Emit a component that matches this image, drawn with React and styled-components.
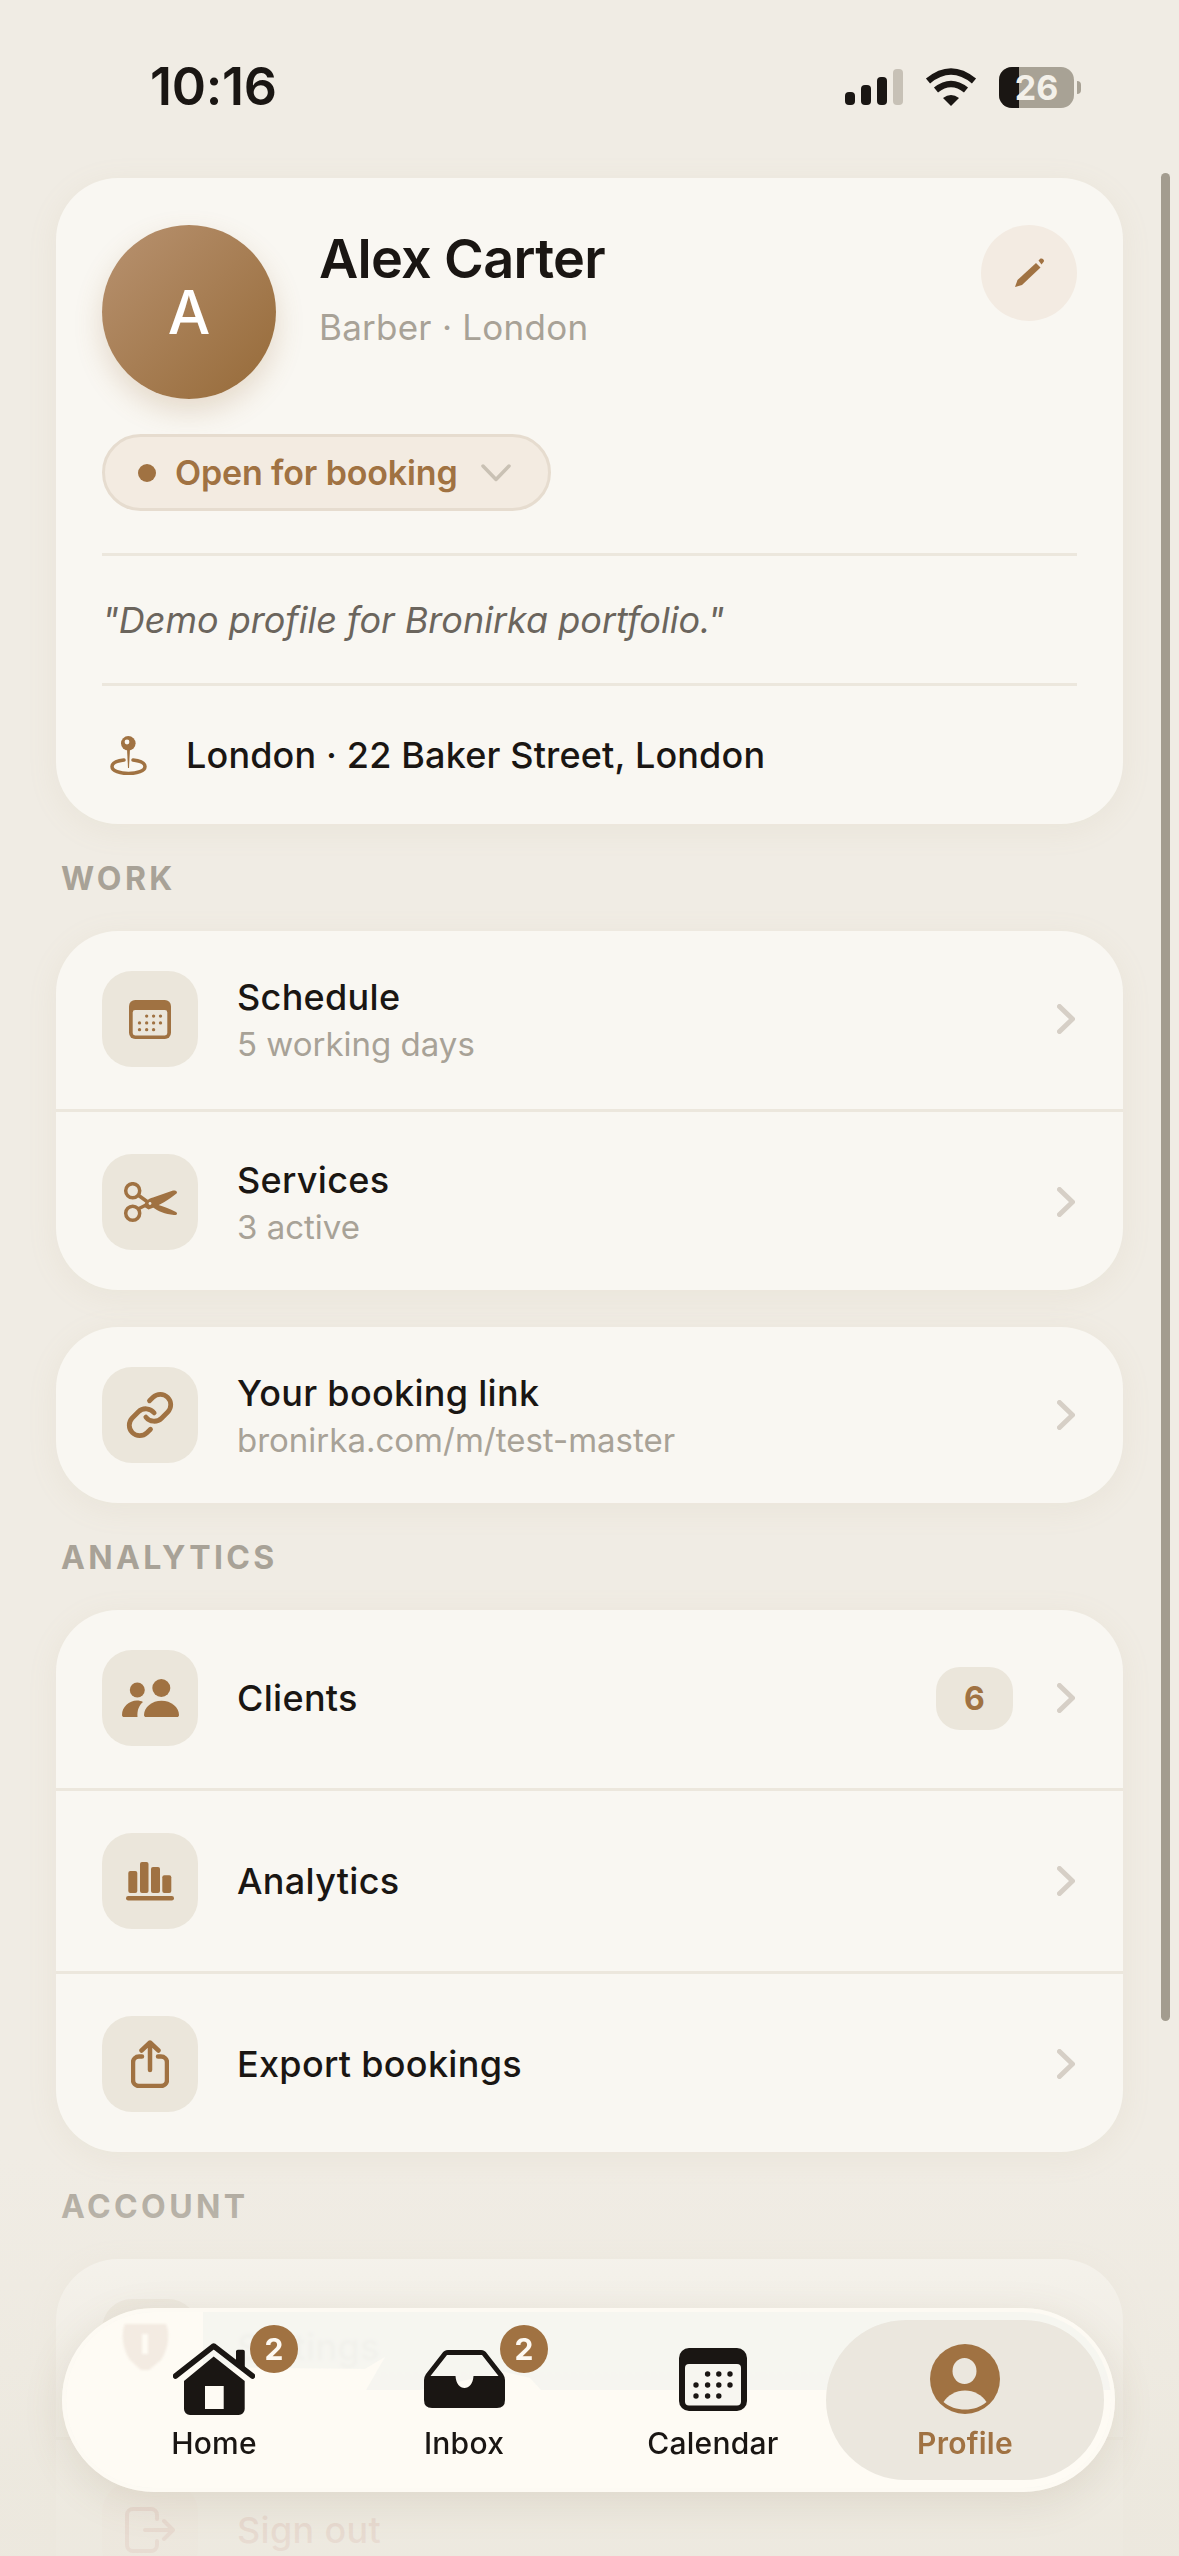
import styled, { createGlobalStyle } from 'styled-components'
import { Link } from 'lucide-react'

const INK = '#1a1613'
const BROWN = '#a07242'
const MUTED = '#a8a297'
const TILE = '#ebe6db'
const CARD = '#f9f7f2'
const LINE = '#ece7dd'
const CREAM = '#fefbf4'

const GlobalStyle = createGlobalStyle`
  html, body { margin: 0; padding: 0; background: #f0ece4; }
  * { box-sizing: border-box; }
  body { font-family: Inter, "Liberation Sans", sans-serif; -webkit-font-smoothing: antialiased; }
`

const Screen = styled.div`
  position: relative;
  width: 1179px;
  height: 2556px;
  overflow: hidden;
  background: #f0ece4;
  color: ${INK};
`

const StatusBar = styled.div`
  display: flex;
  align-items: center;
  justify-content: space-between;
  height: 178px;
  padding: 0 98px 6px 150px;
`

const Time = styled.div`
  margin-top: 2px;
  font-size: 52px;
  font-weight: 600;
  letter-spacing: -0.3px;
  line-height: 60px;
`

const StatusIcons = styled.div`
  display: flex;
  align-items: center;
  margin-top: 2px;
`

const Battery = styled.div`
  position: relative;
  width: 75px;
  height: 41px;
  margin-left: 22px;
  border-radius: 13px;
  overflow: hidden;
  background: #a8a295;
`

const BatteryFill = styled.div`
  height: 100%;
  width: 20px;
  background: ${INK};
`

const BatteryText = styled.div`
  position: absolute;
  inset: 0;
  display: flex;
  align-items: center;
  justify-content: center;
  color: #f3f0e9;
  font-size: 34px;
  font-weight: 700;
`

const BatteryNub = styled.div`
  width: 4px;
  height: 13px;
  margin-left: 3px;
  border-radius: 0 4px 4px 0;
  background: #a8a295;
`

const ScrollBar = styled.div`
  position: absolute;
  top: 173px;
  left: 1161px;
  width: 9px;
  height: 1848px;
  border-radius: 5px;
  background: #a39c8f;
`

const Content = styled.main`
  padding: 0 56px;
`

const Card = styled.section`
  border-radius: 62px;
  background: ${CARD};
  box-shadow: 0 6px 30px rgba(190, 170, 130, 0.1);
  & + & { margin-top: 37px; }
`

const ProfileCard = styled(Card)`
  padding: 47px 46px 0;
`

const ProfileHead = styled.div`
  display: flex;
  align-items: flex-start;
`

const Avatar = styled.div`
  display: flex;
  align-items: center;
  justify-content: center;
  flex: none;
  width: 174px;
  height: 174px;
  border-radius: 50%;
  background: linear-gradient(135deg, #b89270, #966a38);
  box-shadow: 0 12px 28px rgba(160, 114, 66, 0.22);
  color: #fff;
  font-size: 60px;
  font-weight: 500;
`

const ProfileInfo = styled.div`
  flex: 1;
  margin-left: 43px;
  padding-top: 2px;
`

const Name = styled.h1`
  margin: 0;
  font-size: 54px;
  font-weight: 600;
  line-height: 64px;
  letter-spacing: -0.7px;
`

const Role = styled.div`
  margin-top: 14px;
  color: ${MUTED};
  font-size: 35px;
  line-height: 44px;
  letter-spacing: 0.25px;
`

const EditButton = styled.button`
  display: flex;
  align-items: center;
  justify-content: center;
  flex: none;
  width: 96px;
  height: 96px;
  padding: 0;
  border: 0;
  border-radius: 50%;
  background: #f3ebe2;
`

const StatusPill = styled.div`
  display: inline-flex;
  align-items: center;
  height: 77px;
  margin-top: 35px;
  padding: 0 37px 0 33px;
  border: 3px solid #e6dccf;
  border-radius: 39px;
  background: #f3ebe1;
  color: ${BROWN};
  font-size: 34px;
  font-weight: 600;
  letter-spacing: -0.15px;
`

const Dot = styled.span`
  width: 18px;
  height: 18px;
  margin-right: 19px;
  border-radius: 50%;
  background: ${BROWN};
`

const PillChevron = styled.svg`
  margin-left: 23px;
`

const Quote = styled.div`
  display: flex;
  align-items: center;
  height: 133px;
  margin-top: 42px;
  border-top: 3px solid ${LINE};
  border-bottom: 3px solid ${LINE};
  color: #6b655d;
  font-size: 36px;
  font-style: italic;
`

const Place = styled.div`
  display: flex;
  align-items: center;
  gap: 39px;
  height: 138px;
  padding-left: 8px;
  font-size: 36px;
  font-weight: 500;
  letter-spacing: 0.15px;
`

const SectionLabel = styled.h2`
  margin: 35px 0 32px 5px;
  color: ${MUTED};
  font-size: 32px;
  font-weight: 700;
  line-height: 40px;
  letter-spacing: 3.4px;
`

const Row = styled.div`
  display: flex;
  align-items: center;
  padding: 42px 48px 42px 46px;
  border-top: 3px solid ${LINE};
  &:first-child { padding-top: 40px; border-top: 0; }
  &:last-child { padding-bottom: 40px; }
`

const Tile = styled.div`
  display: flex;
  align-items: center;
  justify-content: center;
  flex: none;
  width: 96px;
  height: 96px;
  border-radius: 30px;
  background: ${(p) => (p.$danger ? '#f3e3dc' : TILE)};
`

const RowText = styled.div`
  flex: 1;
  margin-left: 39px;
`

const RowTitle = styled.div`
  font-size: 36px;
  font-weight: 550;
  line-height: 44px;
  letter-spacing: 0.3px;
  color: ${(p) => (p.$danger ? '#b5544a' : INK)};
`

const RowSub = styled.div`
  margin-top: 5px;
  color: ${MUTED};
  font-size: 33px;
  line-height: 40px;
`

const Count = styled.div`
  display: flex;
  align-items: center;
  justify-content: center;
  width: 77px;
  height: 63px;
  margin-right: 44px;
  border-radius: 24px;
  background: ${TILE};
  color: ${BROWN};
  font-size: 32px;
  font-weight: 700;
`

const BottomFade = styled.div`
  position: absolute;
  left: 0;
  right: 0;
  bottom: 0;
  height: 400px;
  background: linear-gradient(to bottom, rgba(240, 236, 228, 0), rgba(238, 234, 225, 0.55) 35%, rgba(236, 232, 222, 0.88) 80%, rgba(236, 232, 222, 0.92));
`

const Nav = styled.nav`
  position: absolute;
  left: 62px;
  bottom: 64px;
  width: 1053px;
  height: 184px;
  padding: 8px 7px 8px 35px;
  overflow: hidden;
  border: 4px solid #fdfaf3;
  border-radius: 92px;
  background: rgba(246, 245, 240, 0.95);
  backdrop-filter: blur(1.5px);
  box-shadow: 0 10px 40px rgba(130, 105, 70, 0.14);
`

const CreamGlass = styled.div`
  position: absolute;
  inset: 0;
  background: ${CREAM};
  clip-path: polygon(0 0, 137px 0, 137px 55px, 299px 57px, 319px 45px, 300px 78px, 354px 78px, 439px 60px, 464px 66px, 475px 78px, 1045px 78px, 1045px 176px, 0 176px);
`

const GhostIcon = styled.svg`
  position: absolute;
  top: 10px;
  left: 53px;
  filter: blur(1px);
`

const TabList = styled.div`
  position: relative;
  display: flex;
  height: 100%;
`

const Tab = styled.div`
  position: relative;
  display: flex;
  flex-direction: column;
  align-items: center;
  flex: 0 0 ${(p) => (p.$active ? '278px' : '226px')};
  margin-right: 24px;
  padding-top: 23px;
  border-radius: 80px;
  background: ${(p) => (p.$active ? '#ebe7de' : 'transparent')};
  color: ${(p) => (p.$active ? BROWN : INK)};
  &:nth-child(2) { margin-right: 23px; }
  &:nth-child(3), &:last-child { margin-right: 0; }
`

const TabIcon = styled.div`
  display: flex;
  align-items: center;
  justify-content: center;
  height: 72px;
`

const TabLabel = styled.div`
  margin-top: 10px;
  font-size: 30px;
  font-weight: ${(p) => (p.$active ? 600 : 500)};
  line-height: 36px;
  letter-spacing: 0.25px;
`

const TabBadge = styled.div`
  position: absolute;
  top: 5px;
  left: 149px;
  display: flex;
  align-items: center;
  justify-content: center;
  width: 48px;
  height: 48px;
  border-radius: 50%;
  background: ${BROWN};
  color: #fdf9f2;
  font-size: 30px;
  font-weight: 700;
`

function Chevron() {
  return (
    <svg width="18" height="30" viewBox="0 0 18 30" fill="none">
      <path d="M2.5 2.5 15.5 15 2.5 27.5" stroke="#d6cfc6" strokeWidth="5" strokeLinecap="round" strokeLinejoin="round" />
    </svg>
  )
}

function CalendarGlyph({ w, h, fill, paper }) {
  const dots = [
    [28.6, 26], [39.8, 26], [51, 26],
    [17, 37], [28.6, 37], [39.8, 37], [51, 37],
    [17, 48], [28.6, 48], [39.8, 48],
  ]
  return (
    <svg width={w} height={h} viewBox="0 0 68 63">
      <rect width="68" height="63" rx="10" fill={fill} />
      <rect x="6" y="16" width="56" height="41.500" rx="4" fill={paper} />
      {dots.map(([x, y]) => <circle key={x + '-' + y} cx={x} cy={y} r="2.700" fill={fill} />)}
    </svg>
  )
}

const icons = {
  schedule: <CalendarGlyph w={42} h={39} fill={BROWN} paper={TILE} />,
  services: (
    <svg width="55" height="41" viewBox="0 0 55 41" fill={BROWN}>
      <circle cx="9.700" cy="8.700" r="7" fill="none" stroke={BROWN} strokeWidth="3.500" />
      <circle cx="9.700" cy="31.300" r="7" fill="none" stroke={BROWN} strokeWidth="3.500" />
      <path d="M15 13 24 19.500M15 27l9-4.500" fill="none" stroke={BROWN} strokeWidth="3.500" />
      <path d="M21.500 25C21 19.500 25 17 30 15.500L50 8.500C53 8 55 10 53.500 11.500 47 17 36 24 25.500 27.500Z" />
      <path d="M29.500 25 34 22.500C40 24 47 27 53 30 55 31.500 54 33.500 51 33 42 32 35 29.500 29.500 25Z" />
      <circle cx="27" cy="21.500" r="1.400" fill={TILE} />
    </svg>
  ),
  link: <Link size={50} color={BROWN} strokeWidth={2.3} />,
  clients: (
    <svg width="57" height="38" viewBox="0 0 57 38" fill={BROWN}>
      <circle cx="39.300" cy="9" r="9" />
      <circle cx="15.300" cy="11" r="7.500" />
      <path d="M22 36C22 28 30 21.700 39.500 21.700 49 21.700 57 28 57 36 57 37.500 56 38 55 38H24C23 38 22 37.500 22 36Z" />
      <path d="M0 36C0 28 7 21.500 15 21.500 17 21.500 19.500 22 21 23 17 26.500 15 31 15.500 38H2C1 38 0 37.500 0 36Z" />
    </svg>
  ),
  analytics: (
    <svg width="48" height="39" viewBox="0 0 48 39" fill={BROWN}>
      <rect x="2.300" y="9" width="9" height="22" rx="2" />
      <rect x="14" y="0" width="8.500" height="31" rx="2" />
      <rect x="25" y="5" width="9" height="26" rx="2" />
      <rect x="36.300" y="13.300" width="9" height="17.700" rx="2" />
      <rect y="34" width="48" height="4.500" rx="2.200" />
    </svg>
  ),
  share: (
    <svg width="38" height="48" viewBox="0 0 38 48" fill="none" stroke={BROWN} strokeWidth="4.500" strokeLinecap="round" strokeLinejoin="round">
      <path d="M11 16.500H8a6 6 0 0 0-6 6V40a6 6 0 0 0 6 6h22a6 6 0 0 0 6-6V22.500a6 6 0 0 0-6-6h-3" />
      <path d="M19 30V3M10.500 10.500 19 2.500l8.500 8" />
    </svg>
  ),
  shield: (
    <svg width="40" height="46" viewBox="0 0 40 46" fill="#b5544a">
      <path d="M20 0 40 7V22C40 34 31 42 20 46 9 42 0 34 0 22V7Z" />
    </svg>
  ),
  signOut: (
    <svg width="50" height="46" viewBox="0 0 50 46" fill="none" stroke="#b5544a" strokeWidth="4" strokeLinecap="round" strokeLinejoin="round">
      <path d="M32 12V8a6 6 0 0 0-6-6H8a6 6 0 0 0-6 6v30a6 6 0 0 0 6 6h18a6 6 0 0 0 6-6v-4" />
      <path d="M20 23h27M39 14l9 9-9 9" />
    </svg>
  ),
}

const tabIcons = {
  home: (
    <svg width="82" height="72" viewBox="0 0 82 72">
      <path d="M63 8.500a1.800 1.800 0 0 1 1.800-1.800H70a1.800 1.800 0 0 1 1.800 1.800V26L63 18Z" fill={INK} />
      <path d="M2.500 33 40.700 3 79.500 33" fill="none" stroke={INK} strokeWidth="5.500" strokeLinecap="round" strokeLinejoin="round" />
      <path fillRule="evenodd" d="M11 38 40.700 13.500 71.700 38V66A6 6 0 0 1 65.700 72H17A6 6 0 0 1 11 66ZM32 43V66H50.700V43Z" fill={INK} />
    </svg>
  ),
  inbox: (
    <svg width="81" height="59" viewBox="0 0 81 59">
      <path fillRule="evenodd" fill={INK} d="M24 0H57Q61 0 63 3.500L79 24Q81 27 81 30V50Q81 58 73 58H8Q0 58 0 50V30Q0 27 2 24L18 3.500Q20 0 24 0ZM23 5 6.500 26H31.500C32 34 36 38 40.500 38 45 38 49 34 49.500 26H74.500L58 5Z" />
    </svg>
  ),
  calendar: <CalendarGlyph w={68} h={63} fill={INK} paper="#f7f6f0" />,
  profile: (
    <svg width="70" height="70" viewBox="0 0 70 70">
      <circle cx="35" cy="35" r="35" fill={BROWN} />
      <ellipse cx="34.500" cy="27" rx="12" ry="13" fill="#ebe7de" />
      <path d="M13.500 58C18 51 26 46.500 35 46.500 44 46.500 52 51 56.500 58 51 63 43 65.500 35 65.500 27 65.500 19 63 13.500 58Z" fill="#ebe7de" />
    </svg>
  ),
}

const workRows = [
  { icon: 'schedule', title: 'Schedule', sub: '5 working days' },
  { icon: 'services', title: 'Services', sub: '3 active' },
]

const analyticsRows = [
  { icon: 'clients', title: 'Clients', count: 6 },
  { icon: 'analytics', title: 'Analytics' },
  { icon: 'share', title: 'Export bookings' },
]

const tabs = [
  { icon: 'home', label: 'Home', badge: 2 },
  { icon: 'inbox', label: 'Inbox', badge: 2 },
  { icon: 'calendar', label: 'Calendar' },
  { icon: 'profile', label: 'Profile', active: true },
]

function MenuRow({ icon, title, sub, count, danger }) {
  return (
    <Row>
      <Tile $danger={danger}>{icons[icon]}</Tile>
      <RowText>
        <RowTitle $danger={danger}>{title}</RowTitle>
        {sub && <RowSub>{sub}</RowSub>}
      </RowText>
      {count && <Count>{count}</Count>}
      {!danger && <Chevron />}
    </Row>
  )
}

export default function App() {
  return (
    <Screen>
      <GlobalStyle />
      <StatusBar>
        <Time>10:16</Time>
        <StatusIcons>
          <svg width="58" height="36" viewBox="0 0 58 36">
            <rect y="23" width="10" height="13" rx="4" fill={INK} />
            <rect x="16" y="16" width="10" height="20" rx="4" fill={INK} />
            <rect x="32" y="8" width="10" height="28" rx="4" fill={INK} />
            <rect x="48" width="10" height="36" rx="4" fill="#c7c1b6" />
          </svg>
          <svg width="52" height="38" viewBox="0 0 52 38" style={{ marginLeft: 22 }}>
            <path d="M3 13Q26-6 49 13M11 22Q26 10 41 22" fill="none" stroke={INK} strokeWidth="6.500" />
            <path d="M18 30Q26 24 34 30L26 38Z" fill={INK} />
          </svg>
          <Battery>
            <BatteryFill />
            <BatteryText>26</BatteryText>
          </Battery>
          <BatteryNub />
        </StatusIcons>
      </StatusBar>

      <Content>
        <ProfileCard>
          <ProfileHead>
            <Avatar>A</Avatar>
            <ProfileInfo>
              <Name>Alex Carter</Name>
              <Role>Barber · London</Role>
            </ProfileInfo>
            <EditButton aria-label="Edit">
              <svg width="30" height="30" viewBox="0 0 30 30" fill={BROWN}>
                <path d="M1 29 3.500 22 22 5 26.500 9.500 8 27Z" />
                <path d="M24.500 2.500 26.500 .6Q28 0 29 1L30 2.500Q30 3.500 29.500 4L27.500 6.500Z" />
              </svg>
            </EditButton>
          </ProfileHead>
          <StatusPill>
            <Dot />
            Open for booking
            <PillChevron width="30" height="18" viewBox="0 0 30 18" fill="none">
              <path d="M2 2 15 15.500 28 2" stroke="#c9c1b4" strokeWidth="3.500" strokeLinecap="round" strokeLinejoin="round" />
            </PillChevron>
          </StatusPill>
          <Quote>"Demo profile for Bronirka portfolio."</Quote>
          <Place>
            <svg width="37" height="39" viewBox="0 0 37 39" fill="none">
              <path d="M14 24C6 25 2 27 2 30.500 2 35 10 37.500 18.500 37.500 27 37.500 35 35 35 30.500 35 27 31 25 23 24" stroke={BROWN} strokeWidth="3.500" strokeLinecap="round" />
              <path d="M17 13H20L19 32H18Z" fill={BROWN} />
              <circle cx="18.300" cy="7.300" r="7.300" fill={BROWN} />
              <circle cx="17" cy="6" r="2.400" fill={CARD} />
            </svg>
            London · 22 Baker Street, London
          </Place>
        </ProfileCard>

        <SectionLabel>WORK</SectionLabel>
        <Card>
          {workRows.map((r) => <MenuRow key={r.title} {...r} />)}
        </Card>
        <Card>
          <MenuRow icon="link" title="Your booking link" sub="bronirka.com/m/test-master" />
        </Card>

        <SectionLabel>ANALYTICS</SectionLabel>
        <Card>
          {analyticsRows.map((r) => <MenuRow key={r.title} {...r} />)}
        </Card>

        <SectionLabel>ACCOUNT</SectionLabel>
        <Card>
          <MenuRow icon="shield" title="Settings" />
          <MenuRow icon="signOut" title="Sign out" danger />
        </Card>
      </Content>

      <ScrollBar />
      <BottomFade />

      <Nav>
        <CreamGlass />
        <GhostIcon width="53" height="48" viewBox="0 0 53 48" aria-hidden="true">
          <path fillRule="evenodd" d="M6 2H47C51 10 50 26 42 38L30 48H22L11 38C3 26 2 10 6 2ZM23 12V32H29V12Z" fill="#f3ebe2" />
        </GhostIcon>
        <TabList>
          {tabs.map((t) => (
            <Tab key={t.label} $active={t.active}>
              <TabIcon>{tabIcons[t.icon]}</TabIcon>
              <TabLabel $active={t.active}>{t.label}</TabLabel>
              {t.badge && <TabBadge>{t.badge}</TabBadge>}
            </Tab>
          ))}
        </TabList>
      </Nav>
    </Screen>
  )
}
